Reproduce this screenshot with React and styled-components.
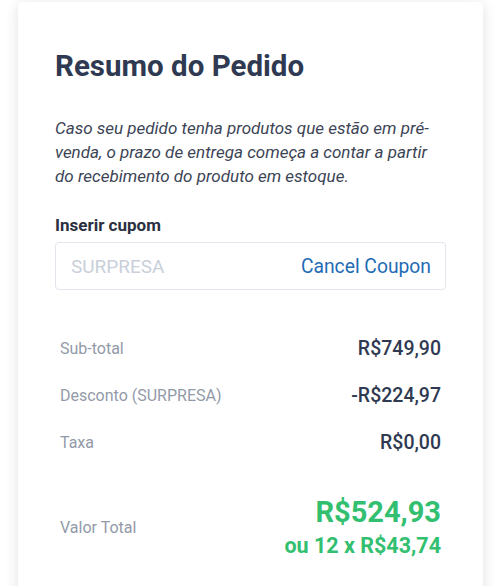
import React from 'react'
import styled, { createGlobalStyle } from 'styled-components'

const GlobalStyle = createGlobalStyle`
  html, body {
    margin: 0;
    padding: 0;
    background: #ffffff;
    font-family: Roboto, "Liberation Sans", sans-serif;
  }
`

const Page = styled.div`
  padding: 2px 17px 0 18px;
  height: 586px;
  overflow: hidden;
  box-sizing: border-box;
`

const Card = styled.section`
  background: #fff;
  border-radius: 5px;
  box-shadow: 0 2px 14px rgba(0, 0, 0, 0.12);
  padding: 42px 37px 40px 37px;
  min-height: 640px;
`

const Title = styled.h1`
  margin: 0;
  font-size: 29.5px;
  font-weight: 700;
  color: #2f3a52;
  line-height: 44px;
`

const Note = styled.p`
  margin: 28px 0 0;
  font-size: 17px;
  font-style: italic;
  line-height: 24px;
  color: #3c4456;
`

const Label = styled.label`
  display: block;
  margin-top: 27px;
  font-size: 17px;
  line-height: 20px;
  font-weight: 700;
  color: #2a3040;
`

const CouponBox = styled.div`
  margin-top: 7px;
  height: 48px;
  box-sizing: border-box;
  border: 1px solid #e2e6ec;
  border-radius: 4px;
  display: flex;
  align-items: center;
  justify-content: space-between;
  padding: 0 14px 0 15px;
`

const CouponInput = styled.input`
  border: none;
  outline: none;
  font-family: inherit;
  font-size: 19px;
  color: #2f3a52;
  width: 180px;
  padding: 0;
  &::placeholder {
    color: #c9d0da;
  }
`

const CancelLink = styled.button`
  border: none;
  background: none;
  padding: 0;
  font-family: inherit;
  font-size: 19.3px;
  color: #1f6bb5;
  cursor: pointer;
`

const Summary = styled.div`
  margin-top: 35px;
  padding: 0 5px;
`

const Row = styled.div`
  display: flex;
  justify-content: space-between;
  align-items: center;
  height: 47px;
`

const RowLabel = styled.span`
  font-size: 16px;
  color: #929aa8;
`

const RowValue = styled.span`
  font-size: 19.5px;
  font-weight: 500;
  color: #2f3a52;
`

const TotalRow = styled.div`
  display: flex;
  justify-content: space-between;
  align-items: center;
  margin-top: 28px;
`

const TotalValues = styled.div`
  display: flex;
  flex-direction: column;
  align-items: flex-end;
  color: #32c070;
  font-weight: 700;
`

const BigTotal = styled.span`
  font-size: 29px;
  line-height: 37px;
`

const Installments = styled.span`
  font-size: 21.5px;
  line-height: 30px;
`

const rows = [
  { label: 'Sub-total', value: 'R$749,90' },
  { label: 'Desconto (SURPRESA)', value: '-R$224,97' },
  { label: 'Taxa', value: 'R$0,00' },
]

export default function App() {
  return (
    <>
      <GlobalStyle />
      <Page>
        <Card>
          <Title>Resumo do Pedido</Title>
          <Note>
            Caso seu pedido tenha produtos que estão em pré-venda, o prazo de
            entrega começa a contar a partir do recebimento do produto em estoque.
          </Note>
          <Label htmlFor="coupon">Inserir cupom</Label>
          <CouponBox>
            <CouponInput id="coupon" placeholder="SURPRESA" />
            <CancelLink>Cancel Coupon</CancelLink>
          </CouponBox>
          <Summary>
            {rows.map(r => (
              <Row key={r.label}>
                <RowLabel>{r.label}</RowLabel>
                <RowValue>{r.value}</RowValue>
              </Row>
            ))}
            <TotalRow>
              <RowLabel>Valor Total</RowLabel>
              <TotalValues>
                <BigTotal>R$524,93</BigTotal>
                <Installments>ou 12 x R$43,74</Installments>
              </TotalValues>
            </TotalRow>
          </Summary>
        </Card>
      </Page>
    </>
  )
}
